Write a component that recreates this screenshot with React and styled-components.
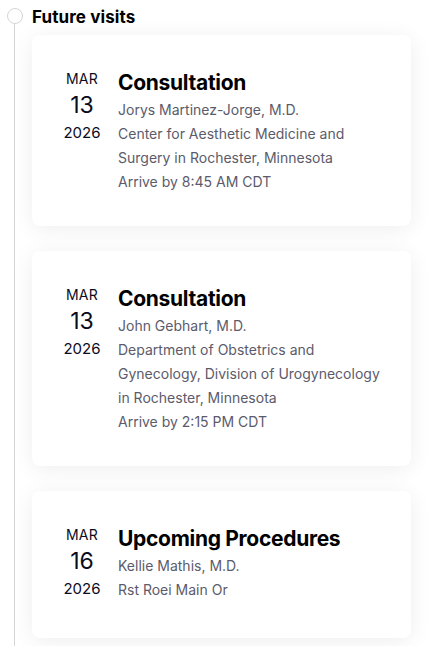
import React from "react";
import styled, { createGlobalStyle } from "styled-components";

const Global = createGlobalStyle`
  html, body { margin: 0; padding: 0; background: #ffffff; }
  body { font-family: Inter, "Open Sans", sans-serif; color: #111; }
`;

const Page = styled.div`
  display: grid;
  grid-template-columns: 32px 1fr;
  width: 435px;
  min-height: 646px;
  box-sizing: border-box;
  padding-right: 24px;
`;

const Rail = styled.div`
  display: flex;
  flex-direction: column;
  align-items: flex-start;
  padding-top: 8px;
`;

const Dot = styled.div`
  width: 14px;
  height: 14px;
  margin-left: 7px;
  border: 1px solid #d6d6d6;
  border-radius: 50%;
  background: #fff;
`;

const Line = styled.div`
  width: 1px;
  flex: 1;
  margin-left: 14px;
  background: #d6d6d6;
`;

const Content = styled.div`
  display: flex;
  flex-direction: column;
  padding-top: 5px;
  padding-bottom: 8px;
`;

const Heading = styled.h2`
  margin: 0 0 6px;
  font-size: 17px;
  line-height: 24px;
  font-weight: 700;
  color: #000;
  letter-spacing: 0.1px;
`;

const List = styled.div`
  display: flex;
  flex-direction: column;
  gap: 25px;
`;

const Card = styled.div`
  display: flex;
  align-items: flex-start;
  background: #fff;
  border-radius: 8px;
  box-shadow: 0 3px 22px rgba(0, 0, 0, 0.07);
  padding: 33px 24px 32px 32px;
`;

const DateCol = styled.div`
  display: flex;
  flex-direction: column;
  align-items: center;
  width: 36px;
  margin-right: 18px;
  color: #0b0b1e;
  padding: 2px 0 6px;
`;

const Month = styled.div`
  font-size: 14px;
  line-height: 18px;
  letter-spacing: 0.3px;
`;

const Day = styled.div`
  font-size: 23px;
  line-height: 34px;
`;

const Year = styled.div`
  font-size: 15px;
  line-height: 22px;
`;

const Info = styled.div`
  display: flex;
  flex-direction: column;
`;

const Title = styled.div`
  font-size: 21px;
  line-height: 30px;
  font-weight: 700;
  color: #000;
  letter-spacing: -0.3px;
`;

const Detail = styled.div`
  font-size: 14px;
  line-height: 24px;
  color: #5b5b6b;
`;

const visits = [
  {
    month: "MAR",
    day: "13",
    year: "2026",
    title: "Consultation",
    lines: [
      "Jorys Martinez-Jorge, M.D.",
      "Center for Aesthetic Medicine and",
      "Surgery in Rochester, Minnesota",
      "Arrive by 8:45 AM CDT",
    ],
  },
  {
    month: "MAR",
    day: "13",
    year: "2026",
    title: "Consultation",
    lines: [
      "John Gebhart, M.D.",
      "Department of Obstetrics and",
      "Gynecology, Division of Urogynecology",
      "in Rochester, Minnesota",
      "Arrive by 2:15 PM CDT",
    ],
  },
  {
    month: "MAR",
    day: "16",
    year: "2026",
    title: "Upcoming Procedures",
    lines: ["Kellie Mathis, M.D.", "Rst Roei Main Or"],
  },
];

export default function App() {
  return (
    <>
      <Global />
      <Page>
        <Rail>
          <Dot />
          <Line />
        </Rail>
        <Content>
          <Heading>Future visits</Heading>
          <List>
            {visits.map((v, i) => (
              <Card key={i}>
                <DateCol>
                  <Month>{v.month}</Month>
                  <Day>{v.day}</Day>
                  <Year>{v.year}</Year>
                </DateCol>
                <Info>
                  <Title>{v.title}</Title>
                  {v.lines.map((l, j) => (
                    <Detail key={j}>{l}</Detail>
                  ))}
                </Info>
              </Card>
            ))}
          </List>
        </Content>
      </Page>
    </>
  );
}
